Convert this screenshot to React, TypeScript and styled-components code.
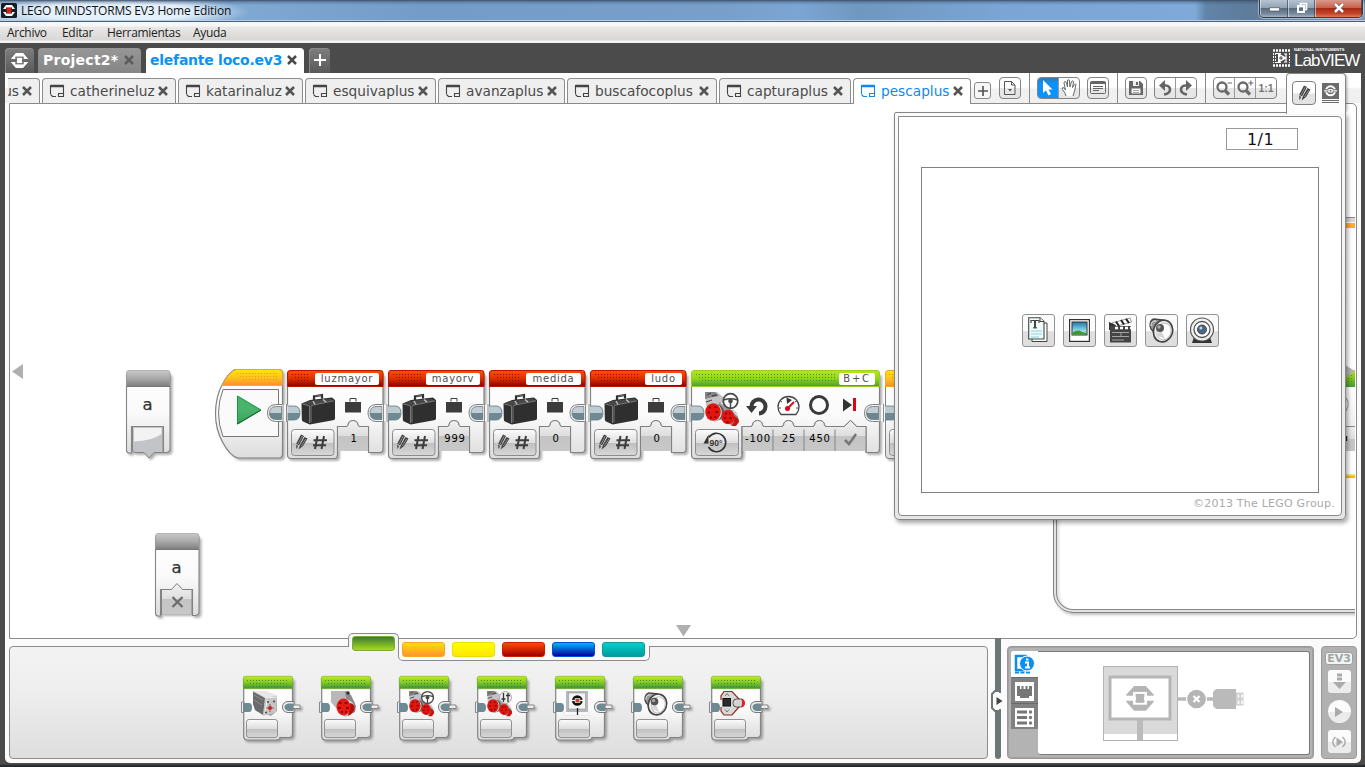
import React from 'react';
import styled, { createGlobalStyle, css } from 'styled-components';

const ui = `'Open Sans', 'Noto Sans', sans-serif`;
const verdana = `'DejaVu Sans', sans-serif`;

const Global = createGlobalStyle`
  * { box-sizing: border-box; }
  html, body { margin: 0; padding: 0; overflow: hidden; }
  body { width: 1365px; height: 767px; background: #4b4b4b; font-family: ${verdana}; }
  svg { display: block; overflow: visible; flex: none; }
`;

const Window = styled.div`
  display: flex;
  flex-direction: column;
  width: 1365px;
  height: 767px;
  background: linear-gradient(#4b4b4b 0 764px, #22272c 766px);
`;

/* ---------- title bar and menu ---------- */
const TitleBar = styled.header`
  display: flex;
  align-items: center;
  height: 22px;
  flex: none;
  padding: 0 2px 0 1px;
  border-bottom: 1px solid #4d5f73;
  box-shadow: inset 0 -1px 0 #b9cfe6;
  background:
    linear-gradient(#3c506b 0, rgba(60, 80, 107, 0.35) 2px, rgba(60, 80, 107, 0) 5px),
    radial-gradient(ellipse 135px 17px at 115px 12px, rgba(233, 244, 253, 0.95) 0 55%, rgba(233, 244, 253, 0) 100%),
    linear-gradient(90deg, #a9c6e2 0, #7fa8d2 240px, #739cc8 420px, #789fca 720px, #7ba5d3 800px, #6f98c0 860px, #7aa5d4 1000px, #7fa9d8 1195px, #6184a8 1206px, #5e7b9a 1250px, #8198ae 1365px);
`;
const AppName = styled.span`
  margin-left: 4px;
  flex: 1;
  font: 12px/20px ${ui};
  letter-spacing: -0.19px;
  color: #111;
  white-space: nowrap;
`;
const WindowButtons = styled.div`
  display: flex;
  align-self: flex-start;
  height: 18px;
  border: 1px solid #2f3d4c;
  border-top: 0;
  border-radius: 0 0 5px 5px;
  overflow: hidden;
  box-shadow: 0 0 0 1px rgba(255, 255, 255, 0.4);
`;
const WindowButton = styled.div<{ $w: number; $close?: boolean }>`
  display: flex;
  align-items: center;
  justify-content: center;
  width: ${(p) => p.$w}px;
  padding-bottom: 1px;
  border-left: 1px solid rgba(240, 245, 250, 0.55);
  border-right: 1px solid rgba(45, 55, 70, 0.6);
  background: ${(p) =>
    p.$close
      ? 'linear-gradient(#d99a8b 0, #c8614c 45%, #a92a12 50%, #c4452a 80%, #df7a55)'
      : 'linear-gradient(#b6c4d2 0, #93a3b4 45%, #5c6c7e 50%, #75879b 80%, #a1b3c4)'};
`;
const MenuBar = styled.nav`
  display: flex;
  gap: 15px;
  height: 21px;
  flex: none;
  padding-left: 7px;
  background: linear-gradient(#f7f7f7 0 4px, #e9e8e7 5px, #d8d7d5 18px, #f4f4f4 19px);
`;
const MenuItem = styled.span<{ $w: number }>`
  width: ${(p) => p.$w}px;
  font: 12px/21px ${ui};
  letter-spacing: -0.3px;
  color: #222;
  white-space: nowrap;
`;

/* ---------- project tabs ---------- */
const ProjectBar = styled.div`
  display: flex;
  align-items: flex-end;
  height: 30px;
  flex: none;
  padding-left: 5px;
`;
const projectTab = css`
  display: flex;
  align-items: center;
  height: 25px;
  padding-bottom: 1px;
  border-radius: 4px 4px 0 0;
`;
const HomeTab = styled.div<{ $w: number; $ml?: number }>`
  ${projectTab}
  justify-content: center;
  width: ${(p) => p.$w}px;
  margin-left: ${(p) => p.$ml ?? 0}px;
  background: linear-gradient(#7e7e7e, #5a5a5a);
  box-shadow: inset 1px 1px 0 #8a8a8a;
`;
const ProjectTab = styled.div<{ $w: number; $ml: number; $active?: boolean; $ls: number }>`
  ${projectTab}
  width: ${(p) => p.$w}px;
  margin-left: ${(p) => p.$ml}px;
  padding-right: 7px;
  padding-left: ${(p) => (p.$active ? 4 : 5)}px;
  justify-content: space-between;
  background: ${(p) => (p.$active ? '#fff' : 'linear-gradient(#979797, #868686)')};
  color: ${(p) => (p.$active ? '#0a93f5' : '#fff')};
  font: bold 14px/24px ${verdana};
  letter-spacing: ${(p) => p.$ls}px;
  white-space: nowrap;
`;
const LabView = styled.div`
  display: flex;
  align-items: center;
  margin-left: auto;
  padding-right: 5px;
  height: 30px;
  gap: 3px;
  color: #fff;
`;
const LabViewText = styled.div`
  display: flex;
  flex-direction: column;
  width: 66px;
  white-space: nowrap;
`;
const LabViewMaker = styled.span`
  font: bold 4px/4px 'Liberation Sans', sans-serif;
  margin-top: 1px;
`;
const LabViewName = styled.span`
  margin-top: -1px;
  font: 17px/19px 'Liberation Sans', sans-serif;
  letter-spacing: -0.9px;
`;

/* ---------- workspace ---------- */
const Workspace = styled.main`
  display: flex;
  flex-direction: column;
  height: 690px;
  margin: 0 4px 0 5px;
  background: #fbfbfb;
  border-radius: 0 0 5px 5px;
  position: relative;
`;
const DocBar = styled.div`
  display: flex;
  height: 30px;
  flex: none;
  padding-left: 3px;
  background: linear-gradient(#fff 0 14px, #f1f1f1 16px, #efefef);
`;
const DocTabs = styled.div`
  display: flex;
  align-items: flex-end;
  gap: 2px;
  padding-top: 5px;
  background: #fff;
`;
const DocTab = styled.div<{ $w: number; $active?: boolean }>`
  display: flex;
  align-items: center;
  justify-content: ${(p) => (p.$w < 50 ? 'flex-end' : 'flex-start')};
  overflow: hidden;
  width: ${(p) => p.$w}px;
  height: ${(p) => (p.$active ? 26 : 25)}px;
  margin-bottom: ${(p) => (p.$active ? -1 : 0)}px;
  position: relative;
  z-index: 1;
  padding: 0 7px ${(p) => (p.$active ? 1 : 0)}px ${(p) => (p.$w < 50 ? 0 : 7)}px;
  border: 1px solid #8d8d8d;
  border-bottom: 0;
  border-left-width: ${(p) => (p.$w < 50 ? 0 : 1)}px;
  border-radius: ${(p) => (p.$w < 50 ? '0 4px 0 0' : '4px 4px 0 0')};
  background: ${(p) => (p.$active ? '#fff' : '#efefef')};
  color: ${(p) => (p.$active ? '#1486f3' : '#4a4a4a')};
  font: 13.7px/23px ${verdana};
  white-space: nowrap;
  span { flex: 1; margin-left: 6px; }
`;
const Tools = styled.div`
  display: flex;
  flex: 1;
  align-items: flex-start;
  padding: 4px 0 0 3px;
`;
const AddDoc = styled.div`
  display: flex;
  align-items: center;
  justify-content: center;
  width: 17px;
  height: 17px;
  margin-top: 5px;
  border: 1px solid #8a8a8a;
  border-radius: 3px;
  background: #f6f6f6;
`;
const Separator = styled.div`
  width: 1px;
  height: 30px;
  margin: -4px 7px 0 8px;
  background: #8a8a8a;
`;
const ToolGroup = styled.div<{ $ml?: number }>`
  display: flex;
  height: 22px;
  margin-left: ${(p) => p.$ml ?? 0}px;
  border: 1px solid #848484;
  border-radius: 4px;
  overflow: hidden;
  background: linear-gradient(#fff 0 48%, #e6e6e6 52%);
`;
const Tool = styled.div<{ $active?: boolean }>`
  display: flex;
  align-items: center;
  justify-content: center;
  width: 20px;
  height: 20px;
  background: ${(p) => (p.$active ? 'linear-gradient(#3579a8, #0a93ff 30%)' : 'transparent')};
  font: bold 10.5px/20px 'Liberation Sans', sans-serif;
  color: #777;
  & + & { border-left: 1px solid #999; width: 21px; }
`;

/* ---------- programming canvas ---------- */
const Canvas = styled.section`
  position: relative;
  width: 1348px;
  height: 536px;
  flex: none;
  margin-left: 4px;
  border: 1px solid #8a8a8a;
  border-radius: 0 5px 5px 0;
  background: #fff;
`;
const Clip = styled.div`
  position: absolute;
  inset: 0 1px 0 0;
  overflow: hidden;
`;
const Node = styled.div<{ $x: number; $y: number; $w?: number }>`
  position: absolute;
  left: ${(p) => p.$x - 10}px;
  top: ${(p) => p.$y - 104}px;
  width: ${(p) => p.$w ?? 97}px;
  height: 90px;
`;
const Art = styled.svg`
  position: absolute;
  left: 0;
  top: 0;
`;
const Shaded = styled.g`
  filter: drop-shadow(2px 2px 1px rgba(0, 0, 0, 0.3));
`;
const NodeHeader = styled.div`
  position: relative;
  display: flex;
  justify-content: flex-end;
  padding: 3px 5px 0 0;
`;
const NodeLabel = styled.span<{ $w: number; $ls?: number }>`
  width: ${(p) => p.$w}px;
  height: 12px;
  border-radius: 2px;
  background: #fff;
  color: #505050;
  font: 10px/12px ${verdana};
  letter-spacing: ${(p) => p.$ls ?? 0.75}px;
  text-align: center;
  white-space: nowrap;
`;
const ValueRow = styled.div<{ $ml: number }>`
  position: relative;
  display: flex;
  margin: 47px 0 0 ${(p) => p.$ml}px;
`;
const Value = styled.span`
  width: 31px;
  padding-left: 1px;
  font: 10px/14px ${verdana};
  letter-spacing: 0.8px;
  text-align: center;
  white-space: nowrap;
  color: #000;
`;
const ParamName = styled.div`
  position: relative;
  padding-top: 24px;
  width: 43px;
  text-align: center;
  font: 16.5px/22px ${verdana};
  -webkit-text-stroke: 0.25px #333;
  color: #333;
`;
const LoopFrame = styled.div`
  position: absolute;
  left: 1043px;
  top: 300px;
  width: 340px;
  height: 209px;
  border: 1px solid #868686;
  border-radius: 0 0 0 20px;
  box-shadow: 2px 2px 3px rgba(0, 0, 0, 0.25), inset 0 0 0 2px #e2e2e2, inset 0 0 0 3px #868686, inset 5px 0 3px rgba(0, 0, 0, 0.14);
`;
const Sliver = styled.div<{ $y: number; $h: number; $bg: string }>`
  position: absolute;
  right: 0;
  top: ${(p) => p.$y - 104}px;
  width: 12px;
  height: ${(p) => p.$h}px;
  background: ${(p) => p.$bg};
`;
const ScrollMark = styled.svg<{ $x: number; $y: number }>`
  position: absolute;
  left: ${(p) => p.$x - 10}px;
  top: ${(p) => p.$y - 104}px;
`;

/* ---------- content editor overlay ---------- */
const Editor = styled.aside`
  position: absolute;
  z-index: 3;
  left: 889px;
  top: 39px;
  width: 452px;
  height: 408px;
  padding: 3px;
  border: 1px solid #868686;
  border-radius: 2px 0 5px 5px;
  background: linear-gradient(#fafafa, #e6e6e6);
  box-shadow: 2px 3px 4px rgba(0, 0, 0, 0.35);
`;
const EditorTab = styled.div`
  position: absolute;
  z-index: 4;
  right: 15px;
  top: 0;
  width: 60px;
  height: 41px;
  display: flex;
  gap: 6px;
  padding: 7px 0 0 5px;
  border: 1px solid #868686;
  border-bottom: 0;
  border-radius: 4px 4px 0 0;
  background: #fcfcfc;
  box-shadow: 3px 0 3px -2px rgba(0, 0, 0, 0.35);
`;
const PencilButton = styled.div`
  display: flex;
  align-items: center;
  justify-content: center;
  width: 24px;
  height: 24px;
  border: 1px solid #808080;
  border-radius: 4px;
  background: linear-gradient(#fff 50%, #e2e2e2 54%);
`;
const EditorBody = styled.div`
  display: flex;
  flex-direction: column;
  width: 444px;
  height: 400px;
  padding: 11px 7px 0 22px;
  border: 1px solid #8a8a8a;
  border-radius: 0 4px 4px 4px;
  background: #fff;
`;
const PageField = styled.div`
  align-self: flex-end;
  width: 72px;
  height: 22px;
  padding-right: 3px;
  margin-right: 36px;
  border: 1px solid #999;
  font: 16px/21px ${verdana};
  letter-spacing: 0.4px;
  text-align: center;
  color: #111;
`;
const PageFrame = styled.div`
  display: flex;
  align-items: center;
  justify-content: center;
  gap: 8px;
  width: 398px;
  height: 326px;
  margin-top: 17px;
  border: 1px solid #808080;
`;
const MediaButton = styled.div`
  display: flex;
  align-items: center;
  justify-content: center;
  width: 33px;
  height: 33px;
  border: 1px solid #929292;
  border-radius: 3px;
  background: linear-gradient(#fbfbfb 50%, #dfdfdf 54%);
`;
const Copyright = styled.div`
  align-self: flex-end;
  margin: 3px -1px 0 0;
  font: 11px/16px ${verdana};
  letter-spacing: 0.23px;
  color: #aaa;
  white-space: nowrap;
`;

/* ---------- footer ---------- */
const Footer = styled.footer`
  display: flex;
  flex: 1;
  padding: 7px 0 0 4px;
`;
const Palette = styled.div`
  display: flex;
  flex-direction: column;
  width: 979px;
  height: 113px;
  border: 1px solid #8c8c8c;
  border-radius: 4px;
  background: linear-gradient(#f3f3f3, #eee 40%, #dedede);
`;
const Categories = styled.div`
  display: flex;
  height: 28px;
  margin: -14px 0 0 338px;
`;
const ActiveCategory = styled.div`
  position: relative;
  z-index: 2;
  width: 51px;
  height: 14px;
  padding: 2px 0 0 3px;
  border: 1px solid #8c8c8c;
  border-width: 1px 1px 0 1px;
  border-radius: 5px 5px 0 0;
  background: #f3f3f3;
`;
const OtherCategories = styled.div`
  position: relative;
  z-index: 1;
  display: flex;
  gap: 7px;
  width: 252px;
  height: 15px;
  margin: 13px 0 0 -1px;
  padding: 0 0 0 3px;
  background: #fbfbfb;
  border: 1px solid #8c8c8c;
  border-top: 0;
  border-radius: 0 0 5px 5px;
`;
const Swatch = styled.div<{ $from: string; $to: string; $edge: string; $active?: boolean }>`
  width: 43px;
  height: 15px;
  flex: none;
  margin-top: ${(p) => (p.$active ? 0 : -4)}px;
  border-radius: 3px;
  border: 1px solid ${(p) => p.$edge};
  background: linear-gradient(${(p) => p.$from}, ${(p) => p.$to});
  box-shadow: ${(p) => (p.$active ? '0 0 0 1px #fff' : 'none')};
`;
const PaletteBlocks = styled.div`
  display: flex;
  gap: 26px;
  margin: 15px 0 0 233px;
`;
const PaletteSlot = styled.div`
  width: 52px;
  height: 66px;
`;
const Splitter = styled.div`
  position: relative;
  width: 6px;
  height: 121px;
  margin: -8px 6px 0 7px;
  border-radius: 0 0 3px 3px;
  background: #6d7577;
`;
const SplitterGrip = styled.svg`
  position: absolute;
  left: -4px;
  top: 52px;
`;
const Hardware = styled.div`
  display: flex;
  width: 307px;
  height: 113px;
  padding: 3px 3px 2px 3px;
  border: 1px solid #989898;
  border-radius: 4px;
  background: #b3b3b3;
  box-shadow: inset 0 0 0 1px #a2a2a2;
`;
const HwTabs = styled.div`
  width: 27px;
  height: 80px;
  position: relative;
  z-index: 1;
  margin-top: 1px;
`;
const HwTab = styled.div<{ $active?: boolean }>`
  display: flex;
  align-items: center;
  justify-content: center;
  height: 26px;
  padding-top: 1px;
  border-top: ${(p) => (p.$active ? 'none' : '1px solid #6a6a6a')};
  background: ${(p) => (p.$active ? '#fff' : '#818181')};
  border-radius: ${(p) => (p.$active ? '2px 0 0 0' : '0')};
`;
const HwContent = styled.div`
  width: 272px;
  height: 104px;
  margin-top: 1px;
  border: 1px solid #7a7a7a;
  border-left: 0;
  border-radius: 0 3px 3px 3px;
  background: #fff;
`;
const Controls = styled.div`
  display: flex;
  flex-direction: column;
  align-items: center;
  width: 36px;
  height: 113px;
  margin-left: 7px;
  padding-top: 5px;
  border: 1px solid #999;
  border-radius: 4px;
  background: #b1b1b1;
`;
const Ev3Badge = styled.div`
  width: 28px;
  height: 13px;
  border: 1px solid #9f9f9f;
  border-radius: 3px;
  background: #eff5f3;
  font: bold 11px/11px 'DejaVu Sans', sans-serif;
  text-align: center;
  color: #a3a3a3;
`;
const ControlButton = styled.div<{ $round?: boolean; $mt: number }>`
  display: flex;
  align-items: center;
  justify-content: center;
  width: 23px;
  height: 23px;
  margin-top: ${(p) => p.$mt}px;
  border-radius: ${(p) => (p.$round ? '50%' : '3px')};
  background: linear-gradient(#fbfbfb 50%, #ececec 52%);
`;

/* ---------- icons ---------- */
const Cross = ({ c = '#555', s = 10 }: { c?: string; s?: number }) => (
  <svg width={s} height={s} viewBox="0 0 10 10"><path d="M1 1L9 9M9 1L1 9" stroke={c} strokeWidth="2.500" /></svg>
);
const Plus = ({ c, s }: { c: string; s: number }) => (
  <svg width={s} height={s} viewBox="0 0 12 12"><path d="M6 0V12M0 6H12" stroke={c} strokeWidth="2" /></svg>
);
const DocIcon = ({ c }: { c: string }) => (
  <svg width="14" height="13" viewBox="0 1 14 13" fill="none" stroke={c}>
    <path d="M.5 10V1.500H13.500V12.500H8.500V9.500H13.500M6 12.500H2.500L.5 10.500" strokeWidth="1.100" /><path d="M.5 2H13.500" strokeWidth="2.500" />
  </svg>
);
const Ev3Mark = ({ c, bg, w }: { c: string; bg: string; w: number }) => (
  <svg width={w} height={w * 0.88} viewBox="0 0 28 25">
    <path d="M8 0H20L28 9V10H0V9ZM0 15H28V16L20 25H8L0 16Z" fill={c} />
    <rect x="7" y="6" width="14" height="13" fill={bg} /><rect x="9.500" y="8" width="9" height="9" fill={c} />
    <path d="M1 12.500H27" stroke={bg} strokeWidth="3" /><rect x="10" y="8.500" width="8" height="8" fill={c} />
  </svg>
);
/* Two thick pencils side by side, tips at the lower left. */
const Pencils = ({ s = 18 }: { s?: number }) => (
  <svg width={s} height={s} viewBox="0 0 18 18">
    <path d="M9 1.500L12 3L7.500 11.500L4 15.500L4.500 10ZM12.500 4L15.500 5.500L11 13L6.500 16.500L8 12Z" fill="#424242" />
    <path d="M10.300 3L6 11M13.800 6L9.300 13" stroke="#a9a9a9" strokeWidth=".7" />
    <path d="M4.500 11.500L6.800 12.600" stroke="#eee" strokeWidth=".9" /><path d="M4.500 13.500L4 16L6 14.500Z" fill="#777" />
  </svg>
);
const Speaker = ({ s }: { s: number }) => (
  <svg width={s} height={s} viewBox="0 0 26 26">
    <path d="M3 12C1 8 2 3 6 2L15 3L10 20L5 14Z" fill="#999" stroke="#444" strokeWidth="1.300" />
    <path d="M3 9C3 5 5 4 8 4" stroke="#e8e8e8" fill="none" />
    <ellipse cx="15" cy="14" rx="9.500" ry="11" fill="#eee" stroke="#444" strokeWidth="1.700" transform="rotate(18 15 14)" />
    <ellipse cx="16" cy="14.500" rx="7" ry="8.500" fill="#fff" stroke="#bbb" transform="rotate(18 16 14.500)" />
    <path d="M8 18L13 13L17 22Z" fill="#d5d5d5" />
    <circle cx="12" cy="11" r="4" fill="#555" /><circle cx="11" cy="10" r="1.700" fill="#aaa" />
  </svg>
);
const Motor = ({ x, y, s = 1 }: { x: number; y: number; s?: number }) => (
  <g transform={`translate(${x} ${y}) scale(${s})`}>
    <path d="M0 0H12L22 8L18 19L1 14Z" fill="#c4c4c4" />
    <path d="M0 0H10L14 4L8 5L0 7Z" fill="#858585" /><path d="M2 3L6 1M7 4L12 3M1 10L7 8" stroke="#4d4d4d" strokeWidth="1.300" />
    <path d="M14 10L24 12L33 24L26 33L14 27Z" fill="#9b9b9b" /><path d="M16 11L24 14L31 23" stroke="#eee" fill="none" strokeWidth="1.500" />
    <path d="M8 11.500C22 11 23 28 9 29.500Z" fill="#5a5a5a" /><path d="M8 11.500C19 11 20 28 9 29.500Z" fill="#dcdcdc" />
    <ellipse cx="8" cy="20" rx="7.800" ry="8.800" fill="#e3150f" /><path d="M4 15.500h2M9.500 15h2M2.500 20.500h2.500M10.500 20h2.500M5 25.500h2M9.500 25h2" stroke="#6c0000" strokeWidth="1.700" />
    <path d="M24 17L31 20L34 28L30 34L24 32Z" fill="#8a8a8a" /><path d="M28 19L33 24" stroke="#ddd" strokeWidth="1.500" />
    <ellipse cx="23" cy="25" rx="6.500" ry="7.300" fill="#e3150f" /><path d="M20 21.500h2M24 21.500h1.500M19 26h2M24.500 26h2M21.500 30h2" stroke="#6c0000" strokeWidth="1.500" />
    <path d="M29 24Q34 26 34 30L31 34H26Q30 31 29 24Z" fill="#c9130d" />
  </g>
);
const Wheel = ({ cx, cy, r }: { cx: number; cy: number; r: number }) => (
  <g transform={`translate(${cx} ${cy}) scale(${r / 8})`} fill="none" stroke="#484848">
    <circle r="7.300" fill="#fff" fillOpacity=".85" strokeWidth="1.700" /><path d="M-7 -1Q0 -3.500 7 -1M0 1V7" strokeWidth="1.500" /><circle r="2.300" fill="#484848" stroke="none" />
  </g>
);
const Case = ({ x, y }: { x: number; y: number }) => (
  <g transform={`translate(${x} ${y})`}>
    <path d="M13 6.500V2.500L21 1V4.500" fill="none" stroke="#2d2d2d" strokeWidth="2.200" /><path d="M14 2.200L20.500 1" stroke="#888" strokeWidth=".7" />
    <path d="M.5 9.500L9 6L31 3.500L34 6L34 24.500Q34 26 32 26.300L10 30.300Q8.500 30.600 7 29.800L2 27.500Q.8 27 .8 25Z" fill="#2f2f2f" />
    <path d="M1.500 9.500L9.500 11L32.500 6.800L30 4.700L9 7Z" fill="#484848" />
    <path d="M1.300 10L8.500 11.800V29M10 11.500L33 6.800M10 28.500V12" stroke="#8b8b8b" fill="none" strokeWidth=".8" />
    <path d="M12 7L14 10.500M22 5.500L25 8" stroke="#c5c5c5" strokeWidth="1.300" />
  </g>
);
const Dots = ({ x, n, c, y = 4 }: { x: number; n: number; c: string; y?: number }) => (
  <g fill={c}>
    {[0, 1, 2].map((r) => Array.from({ length: Math.max(0, n - r) }, (_, i) => <rect key={`${r}-${i}`} x={x + (i + r) * 3} y={y + r * 3} width="1" height="1" />))}
  </g>
);
const PlugIn = ({ x = 0, y = 36, h = 14, w = 13 }: { x?: number; y?: number; h?: number; w?: number }) => (
  <g>
    <path d={`M${x} ${y}H${x + w - 6}Q${x + w} ${y} ${x + w} ${y + h / 2}Q${x + w} ${y + h} ${x + w - 6} ${y + h}H${x}Z`} fill="#6f8a93" />
    <path d={`M${x} ${y}H${x + w - 6}Q${x + w} ${y} ${x + w} ${y + h / 2}H${x}Z`} fill="#bccad1" />
    <path d={`M${x} ${y}H${x + w - 6}Q${x + w} ${y} ${x + w} ${y + h / 2}Q${x + w} ${y + h} ${x + w - 6} ${y + h}H${x}`} fill="none" stroke="#657b84" strokeWidth=".8" />
  </g>
);
const PlugOut = ({ x }: { x: number }) => (
  <g>
    <path d={`M${x + 1} 34.500H${x - 7}Q${x - 15} 35 ${x - 15} 43Q${x - 15} 51 ${x - 7} 51.500H${x + 1}Z`} fill="#f4f4f4" stroke="#808080" />
    <path d={`M${x - 1} 36.500H${x - 7}Q${x - 13} 37 ${x - 13} 43H${x - 1}Z`} fill="#c3ced4" />
    <path d={`M${x - 1} 43H${x - 13}Q${x - 13} 49 ${x - 7} 49.500H${x - 1}Z`} fill="#6c858e" />
    <path d={`M${x - 1} 36.500H${x - 7}Q${x - 13} 37 ${x - 13} 43Q${x - 13} 49 ${x - 7} 49.500H${x - 1}Z`} fill="none" stroke="#657b84" strokeWidth=".8" />
    <rect x={x - 0.5} y="34.500" width="5.500" height="17" fill="#f6f6f6" /><path d={`M${x + 0.5} 34V52M${x + 4} 34V52`} stroke="#8a8a8a" />
  </g>
);
const Gradients = () => (
  <svg width="0" height="0">
    <defs>
      {[
        ['body', '#fff', '#fafafa', '#dcdcdc'], ['red', '#ff4f00', '#e03000', '#8a0000'], ['green', '#b5ea12', '#93d51c', '#4a9a38'],
        ['orange', '#ffe800', '#ffc41c', '#ff8d30'], ['gray', '#c8c8c8', '#a9a9a9', '#7d7d7d'], ['lime', '#c5ee10', '#84c92a', '#3f9038'], ['tri', '#4ab46c', '#4ab46c', '#35a457'],
      ].map(([id, a, b, c]) => (
        <linearGradient key={id} id={id} x1="0" y1="0" x2="0" y2="1"><stop offset="0" stopColor={a} /><stop offset=".5" stopColor={b} /><stop offset="1" stopColor={c} /></linearGradient>
      ))}
      <linearGradient id="tray" x1="0" y1="0" x2="0" y2="1"><stop offset="0" stopColor="#f2f2f2" /><stop offset=".5" stopColor="#dedede" /><stop offset=".52" stopColor="#c4c4c4" /><stop offset="1" stopColor="#c8c8c8" /></linearGradient>
      <linearGradient id="btn" x1="0" y1="0" x2="0" y2="1"><stop offset="0" stopColor="#fdfdfd" /><stop offset=".5" stopColor="#dedede" /><stop offset=".53" stopColor="#c0c0c0" /><stop offset="1" stopColor="#d8d8d8" /></linearGradient>
      <linearGradient id="sky" x1="0" y1="0" x2="0" y2="1"><stop offset="0" stopColor="#167ba9" /><stop offset=".7" stopColor="#9bdcf0" /></linearGradient>
    </defs>
  </svg>
);

/* Body outline shared by all canvas blocks: mode foot on the left, value tray, short foot on the right. */
const BlockShape = ({ w, mode, slots, head, edge }: { w: number; mode: number; slots: number; head: string; edge: string }) => {
  const trayEnd = mode + slots * 31;
  const bumps = Array.from({ length: slots }, (_, i) => {
    const c = mode + 15.5 + i * 31;
    return i === 3 ? `H${c - 6}L${c} 50.500L${c + 6} 56.500` : `H${c - 6}Q${c - 4.500} 55 ${c - 4.500} 53Q${c - 3} 50.500 ${c} 50.500Q${c + 3} 50.500 ${c + 4.500} 53Q${c + 4.500} 55 ${c + 6} 56.500`;
  }).join('');
  return (
    <>
      <Shaded>
        <path d={`M.5 4V85Q.5 88.500 4 88.500H${mode - 3}Q${mode} 88.500 ${mode} 85V56.500${bumps}H${trayEnd}V82.500H${w - 3}Q${w} 82.500 ${w} 79V4Z`} fill="url(#body)" stroke="#828282" strokeWidth="1.200" />
      </Shaded>
      <path d={`M${mode + 0.5} 57${bumps}H${trayEnd}V81H${mode + 0.5}Z`} fill="url(#tray)" />
      <path d={`M${mode} 84V56.500${bumps}H${trayEnd}V82`} fill="none" stroke="#808080" />
      {Array.from({ length: slots - 1 }, (_, i) => <path key={i} d={`M${mode + 31 * (i + 1)} 59.500V81`} stroke="#858585" />)}
      <path d={`M.5 16.500V3Q.5 .5 3 .5H${w - 2.500}Q${w} .5 ${w} 3V16.500Z`} fill={`url(#${head})`} stroke={edge} strokeWidth="1" />
      <PlugIn /><PlugOut x={w} />
      <rect x="4.500" y="59.500" width={mode - 8} height="26" rx="3" fill="url(#btn)" stroke="#8c8c8c" />
    </>
  );
};

const VariableBlock = ({ x, name, value, labelW }: { x: number; name: string; value: string; labelW: number }) => (
  <Node $x={x} $y={370}>
    <Art width="97" height="90">
      <BlockShape w={96} mode={50.500} slots={1} head="red" edge="#b81400" />
      <Dots x={5} n={Math.floor((84 - labelW) / 3)} c="#861000" />
      <Case x={14} y={24} />
      <path d="M58 32H74V42.500H58Z" fill="#3c3c3c" /><path d="M63 31.500V28.500H69V31.500" stroke="#3c3c3c" fill="#fff" />
      <g transform="translate(5 63)"><Pencils s={18} /></g>
      <path d="M30.500 66L28 79M37 66L34.500 79M26.500 70.200H40M26 75.200H39" stroke="#3d3d3d" strokeWidth="2" />
    </Art>
    <NodeHeader><NodeLabel $w={labelW}>{name}</NodeLabel></NodeHeader>
    <ValueRow $ml={51}><Value>{value}</Value></ValueRow>
  </Node>
);

const MoveBlock = () => (
  <Node $x={691} $y={370} $w={189}>
    <Art width="189" height="90">
      <BlockShape w={188.500} mode={51} slots={4} head="green" edge="#9ccc20" />
      <Dots x={5} n={47} c="#2f9a2c" />
      <Motor x={14} y={22} /><Wheel cx={39.500} cy={31} r={8} />
      <path d="M60.500 37A7 7 0 1 1 68 43.500" fill="none" stroke="#3a3a3a" strokeWidth="4" /><path d="M55 36H66L60.500 43Z" fill="#3a3a3a" />
      <path d="M90 44.500Q87 41 87 37A10.500 10.500 0 1 1 108 37Q108 41 105 44.500Z" fill="#fff" stroke="#444" strokeWidth="1.300" />
      <path d="M91 32l-1.500-1M104 32l1.500-1M90 38h-2m17 0h2" stroke="#444" /><path d="M96 34L95.500 27.500L101 30Z" fill="#333" /><circle cx="96.500" cy="38.500" r="2.500" fill="#e3001b" /><path d="M97 38L103 32" stroke="#e3001b" strokeWidth="1.800" />
      <circle cx="128" cy="35" r="8.500" fill="none" stroke="#3a3a3a" strokeWidth="3" />
      <path d="M152 28.500L161 35L152 41.500Z" fill="#333" /><rect x="162" y="28" width="3" height="13" fill="#e3001b" />
      <path d="M154 70L158 74L165 64" fill="none" stroke="#777" strokeWidth="2.500" />
      <path d="M17.800 67.500A9.200 9.200 0 1 1 17.500 77" fill="none" stroke="#333" strokeWidth="1.600" /><path d="M12.500 73.500L17.500 64.500V73.500Z" fill="#333" />
      <text x="18.500" y="75.500" fontFamily="Liberation Sans" fontSize="8.500" fontWeight="bold" fill="#333" textLength="13">90°</text>
    </Art>
    <NodeHeader><NodeLabel $w={36} $ls={1.7}>B+C</NodeLabel></NodeHeader>
    <ValueRow $ml={51}><Value>-100</Value><Value>25</Value><Value>450</Value></ValueRow>
  </Node>
);

const StartBlock = () => (
  <Node $x={215} $y={369}>
    <Art width="70" height="90">
      <Shaded>
        <path d="M20 .5H64Q67.500 .5 67.500 4V85Q67.500 89 64 89H23Q15 87 7.500 73Q.5 60 .5 45Q.5 28 7 16Q13 4 20 .5Z" fill="url(#body)" stroke="#828282" strokeWidth="1.200" />
      </Shaded>
      <path d="M7 16.500Q13 4 21 .5H64Q67.500 .5 67.500 4V16.500Z" fill="url(#orange)" stroke="#f0a528" strokeWidth=".8" />
      <Dots x={22} n={14} c="#e0a010" />
      <path d="M8 20.500H63.500V67.500H8Q3.500 56 3.500 44Q3.500 32 8 20.500Z" fill="#fafafa" stroke="#777" />
      <path d="M22.500 27L46 41L22.500 55Z" fill="url(#tri)" stroke="#169440" /><path d="M46 41L22.500 55" stroke="#135c29" />
      <g transform="translate(0 1)"><PlugOut x={67.500} /></g>
    </Art>
  </Node>
);

const ParamBlock = ({ x, y, output }: { x: number; y: number; output?: boolean }) => (
  <Node $x={x} $y={y} $w={44}>
    <Art width="44" height="90">
      <Shaded>
        <path d="M.5 4V80Q.5 83 3 83H5.500V56.500H37.500V82.500H41Q44 82 44 79V4Z" fill="url(#body)" stroke="#858585" strokeWidth="1.100" />
        {output
          ? <path d="M6.500 56.500H16.500L22 50.500L27.500 56.500H37V81H6.500Z" fill="url(#tray)" />
          : <path d="M6.500 56.500H37V82.500H28L23 88L18 82.500H9Q6.500 82.500 6.500 79Z" fill="#c2c4c7" stroke="#858585" />}
      </Shaded>
      {output
        ? <><path d="M6.500 82V56.500H16.500L22 50.500L27.500 56.500H37V81" fill="none" stroke="#808080" /><path d="M17.500 64L27.500 74M27.500 64L17.500 74" stroke="#6c6c6c" strokeWidth="2.300" /></>
        : <path d="M8 58H35.500V64Q26 71 8 71.500Z" fill="#f3f3f3" />}
      <path d="M.5 16.500V3Q.5 .5 3 .5H41.500Q44 .5 44 3V16.500Z" fill="url(#gray)" stroke="#a0a0a0" strokeWidth=".7" />
      <path d="M0 16.500H44" stroke="#777" />
    </Art>
    <ParamName>a</ParamName>
  </Node>
);

const paletteIcons: React.ReactNode[] = [
  <g key="m"><path d="M10 15H22L34 20V35L28 40L13 35Z" fill="#a8a8a8" /><path d="M10 15H23L34 20L22 22Z" fill="#e8e8e8" /><path d="M10 16L22 22L20 39L12 34L10 28Z" fill="#6a6a6a" /><path d="M11 19L20 24M11 24L19 29" stroke="#8f8f8f" /><path d="M22 22L34 21L33 36L20 40Z" fill="#c6c6c6" /><path d="M22 22L34 21M24 24L22 38" stroke="#fff" strokeWidth=".8" /><circle cx="27" cy="32" r="2" fill="#c22" /><path d="M27 28v8m-4-4h8" stroke="#a33" strokeWidth=".8" /><circle cx="25" cy="26" r="1" fill="#444" /><circle cx="31" cy="25.500" r="1" fill="#444" /><circle cx="23" cy="36.500" r="1" fill="#444" /></g>,
  <g key="l"><path d="M10 15H27L34 27V36L24 41L15 32L10 26Z" fill="#b8b8b8" /><path d="M24 15L30 19L35 30L34 36L28 38" fill="#8a8a8a" /><circle cx="27" cy="17" r="1.800" fill="#333" /><path d="M23 23C36 24 36 37 27 40Z" fill="#ddd" /><path d="M29 27C36 28 35 37 27 40Z" fill="#b60e0b" /><ellipse cx="22.500" cy="31" rx="7" ry="8.500" fill="#e41a14" /><path d="M18 27h2.500m3 0h3M17 32h3m5 0h3M20 36h2m2 0h2" stroke="#7a0000" strokeWidth="1.600" /></g>,
  <g key="s"><Motor x={10} y={15} s={0.74} /><Wheel cx={28.500} cy={21.500} r={6.500} /></g>,
  <g key="t"><Motor x={10} y={15} s={0.74} /><circle cx="28.500" cy="21.500" r="6" fill="#eee" stroke="#aaa" /><path d="M26.500 17v9M31 17v9M24.500 23h4M29 19.500h4" stroke="#333" strokeWidth="1.300" /></g>,
  <g key="d"><rect x="11" y="15" width="22" height="23" fill="#b4b9bd" /><rect x="13.500" y="17" width="17" height="16" fill="#f4f4f4" stroke="#888" strokeWidth=".5" /><circle cx="22.300" cy="24.500" r="5.300" fill="#111" /><path d="M16.500 24.500H28" stroke="#f4f4f4" strokeWidth="1.200" /><rect x="19.800" y="22.300" width="5.400" height="4.400" fill="#fff" /><rect x="20.500" y="23" width="4" height="3" fill="#e33a1b" /><path d="M9 36V39.500H34V36" fill="#f8f8f8" stroke="#ddd" strokeWidth=".5" /><path d="M22.500 32v7" stroke="#222" strokeWidth="1.300" /></g>,
  <g key="a" transform="translate(10 15)"><Speaker s={25} /></g>,
  <g key="b"><path d="M13 15.500H21L28 23V31L21 39H13L10 35V20Z" fill="#d8d8d8" stroke="#8d2d1b" strokeWidth="1.200" /><path d="M10 24V31" stroke="#eee" strokeWidth="2" /><rect x="12" y="22.500" width="7.500" height="7.500" fill="#2b2b2b" stroke="#111" /><path d="M14 20L16 17.500L18 20M14 33.500L16 36L18 33.500" stroke="#777" fill="none" /><rect x="22" y="23" width="11" height="8" rx="3.500" fill="#d5d5d5" stroke="#333" strokeWidth=".8" /><path d="M30 22.500Q34 23 34 27Q34 31 30 31.500Q32 27 30 22.500Z" fill="#e02030" /></g>,
];

const PaletteBlock = ({ icon }: { icon: React.ReactNode }) => (
  <PaletteSlot>
    <svg width="52" height="66" viewBox="0 0 52 66">
      <Shaded>
        <path d="M.7 3V60Q.7 64 4.500 64H33Q37 64 37 61.500H46Q49.500 61.500 49.500 58V3Z" fill="url(#body)" stroke="#838383" strokeWidth="1.200" />
        <path d="M49.500 29H57V32.500H49.500Z" fill="#eee" stroke="#888" />
      </Shaded>
      <path d="M.3 12.700V2Q.3 .3 2 .3H48Q49.700 .3 49.700 2V12.700Z" fill="url(#lime)" stroke="#6fb52c" strokeWidth=".6" />
      <Dots x={4} n={14} c="#2a922f" />
      <rect x="3.500" y="43.500" width="31" height="18" rx="2.500" fill="url(#btn)" stroke="#929292" />
      <path d="M-1.500 26H1V36.500H-1.500Z" fill="#eee" stroke="#888" /><path d="M0 27H6Q9 27 9 31.500Q9 36 6 36H0Z" fill="#6f8a93" />
      <path d="M51 25.500H45Q39.500 26 39.500 31Q39.500 36 45 36.500H51V33H50V29H51Z" fill="#eee" stroke="#777" /><path d="M50 27.500H45.500Q41.500 28 41.500 31Q41.500 34 45.500 35H50Z" fill="#6f8a93" />
      {icon}
    </svg>
  </PaletteSlot>
);

const docs: [string, number, boolean?][] = [
  ['catherineluz', 134], ['katarinaluz', 125], ['esquivaplus', 131], ['avanzaplus', 127], ['buscafocoplus', 150], ['capturaplus', 132], ['pescaplus', 118, true],
];
const variables: [number, string, string, number][] = [[287, 'luzmayor', '1', 64], [388, 'mayorv', '999', 54], [489, 'medida', '0', 55], [590, 'ludo', '0', 37]];

const Magnifier = ({ plus }: { plus?: boolean }) => (
  <svg width="18" height="18" viewBox="0 0 18 18" fill="none" stroke="#6a6a6a"><circle cx="7" cy="8" r="4.500" strokeWidth="2.300" /><path d="M10 11.500L14 15.500" strokeWidth="3.200" /><path d={plus ? 'M14.800 1.500V6.500M12.300 4H17.300' : 'M12.500 4H17'} strokeWidth="1.100" /></svg>
);
const Turn = ({ flip }: { flip?: boolean }) => (
  <svg width="16" height="16" viewBox="0 0 16 16"><g transform={flip ? 'translate(16 0) scale(-1 1)' : undefined}><path d="M5 5.500H8.500Q13 6 13 9.500Q13 13.500 7 14.500" fill="none" stroke="#666" strokeWidth="2.600" /><path d="M2 5.500L8 0V11Z" fill="#666" /></g></svg>
);

export default function App() {
  return (
    <Window>
      <Global />
      <TitleBar>
        <svg width="16" height="17" viewBox="0 0 16 17"><rect y="1" width="16" height="15" rx="1.500" fill="#151e25" /><path d="M5 3H11L14 7H11V5.500H5V7H2ZM2 10H5V11.500H11V10H14L11 14H5Z" fill="#fff" /><rect x="5.500" y="6" width="5" height="5" fill="#d22418" /></svg>
        <AppName>LEGO MINDSTORMS EV3 Home Edition</AppName>
        <WindowButtons>
          <WindowButton $w={28}><svg width="11" height="4"><rect x=".5" y="1.800" width="10" height="3.200" fill="#fff" stroke="#4a5866" strokeWidth=".7" /></svg></WindowButton>
          <WindowButton $w={27}><svg width="12" height="12" fill="none"><path d="M4.500 3.500V1.500H10.500V7.500H8.500" stroke="#fff" strokeWidth="1.600" /><rect x="2" y="4" width="6" height="6" stroke="#fff" strokeWidth="2" /></svg></WindowButton>
          <WindowButton $w={47} $close><svg width="12" height="10"><path d="M2 1L10 9M10 1L2 9" stroke="#544" strokeWidth="3.800" /><path d="M2 1L10 9M10 1L2 9" stroke="#fff" strokeWidth="2.500" /></svg></WindowButton>
        </WindowButtons>
      </TitleBar>
      <MenuBar>
        <MenuItem $w={40}>Archivo</MenuItem><MenuItem $w={30}>Editar</MenuItem><MenuItem $w={71}>Herramientas</MenuItem><MenuItem $w={36}>Ayuda</MenuItem>
      </MenuBar>
      <ProjectBar>
        <HomeTab $w={29}><Ev3Mark c="#fff" bg="#6a6a6a" w={17} /></HomeTab>
        <ProjectTab $w={103} $ml={4} $ls={0.25}>Project2*<Cross c="#5c5c5c" /></ProjectTab>
        <ProjectTab $w={158} $ml={5} $ls={-0.25} $active>elefante loco.ev3<Cross c="#4a4a4a" /></ProjectTab>
        <HomeTab $w={21} $ml={5}><Plus c="#fff" s={12} /></HomeTab>
        <LabView>
          <svg width="19" height="18" viewBox="0 0 19 18" fill="none" stroke="#fff"><path d="M1 1.500H18M1 16.500H18" strokeWidth="2.500" strokeDasharray="2 1" /><path d="M1.500 4V14M17.500 4V14M3.500 4V14" strokeDasharray="2 1" /><path d="M4 4.500H9M4 13.500H9M14 5V13M12 5H15M12 13H15" strokeWidth="1.200" /><path d="M6 4L15 9L6 14Z" fill="#fff" stroke="none" /><path d="M9 7V11M7 9H11" stroke="#4b4b4b" /></svg>
          <LabViewText><LabViewMaker>NATIONAL INSTRUMENTS</LabViewMaker><LabViewName>LabVIEW</LabViewName></LabViewText>
        </LabView>
      </ProjectBar>

      <Workspace>
        <DocBar>
          <DocTabs>
            <DocTab $w={32}>us<svg width="3" height="1" /><Cross /></DocTab>
            {docs.map(([name, w, active]) => (
              <DocTab key={name} $w={w} $active={active}><DocIcon c={active ? '#1486f3' : '#444'} /><span>{name}</span><Cross /></DocTab>
            ))}
          </DocTabs>
          <Tools>
            <AddDoc><Plus c="#555" s={10} /></AddDoc>
            <ToolGroup $ml={8}><Tool><svg width="12" height="14" fill="none" stroke="#555"><path d="M.5 .5H7.500L11 4V13.500H.5ZM7.500 .5V4H11" /><path d="M4 8H8L6 10.500Z" fill="#555" stroke="none" /></svg></Tool></ToolGroup>
            <Separator />
            <ToolGroup>
              <Tool $active><svg width="12" height="16"><path d="M1 0V13L4 10.500L6.500 15.500L9 14L6.500 9.500H10.500Z" fill="#fff" /></svg></Tool>
              <Tool><svg width="16" height="18" viewBox="0 0 16 18"><path d="M5 17Q4.500 14 1.500 10.500Q.5 8.500 2 8.500Q3 8.500 4.500 11L3 4Q3 2.500 4 2.500Q5 2.500 5.500 4L6.500 8V2Q6.500 .7 7.500 .7Q8.500 .7 8.500 2L9 8L10.500 2.500Q11 1.500 12 2Q12.700 2.500 12.300 4L11.500 8.500L13.500 5.500Q14.500 4.500 15 5.500L14 10Q13 14 12 17" fill="#fff" stroke="#666" /></svg></Tool>
            </ToolGroup>
            <ToolGroup $ml={7}><Tool><svg width="16" height="14" fill="none" stroke="#666"><rect x=".5" y=".5" width="15" height="12" rx="1" /><path d="M0 2H16" strokeWidth="2" /><path d="M3 5.500H13M3 7.500H13M3 9.500H9" /></svg></Tool></ToolGroup>
            <Separator />
            <ToolGroup><Tool><svg width="14" height="14"><path d="M0 0H11L14 3V14H0Z" fill="#666" /><rect x="4" y="0" width="6" height="5" fill="#eee" /><rect x="7" y="1" width="2" height="3" fill="#666" /><rect x="2.500" y="7.500" width="9" height="5" fill="#f4f4f4" /><path d="M4 9.500H10M4 11.500H10" stroke="#999" strokeWidth=".8" /></svg></Tool></ToolGroup>
            <ToolGroup $ml={7}><Tool><Turn /></Tool><Tool><Turn flip /></Tool></ToolGroup>
            <Separator />
            <ToolGroup><Tool><Magnifier /></Tool><Tool><Magnifier plus /></Tool><Tool>1:1</Tool></ToolGroup>
          </Tools>
        </DocBar>

        <Canvas>
          <Gradients />
          <Clip>
            <LoopFrame />
            <Sliver $y={217} $h={5} $bg="linear-gradient(#888 1px, #d5d5d5 1px)" />
            <Sliver $y={223} $h={5} $bg="#ffab2d" />
            <Sliver $y={370} $h={17} $bg="linear-gradient(#b5ea12, #4a9a38)" />
            <Sliver $y={387} $h={40} $bg="linear-gradient(#fff, #eee)" />
            <Sliver $y={426} $h={25} $bg="linear-gradient(#888 1px, #eee 1px, #ddd 50%, #c5c5c5 52%)" />
            <Sliver $y={474} $h={4} $bg="linear-gradient(#f2e3a0 1px, #f3bf00 2px)" />
            <ScrollMark $x={1345} $y={365} width="11" height="85"><g fill="#1f9a2c"><rect x="3" y="10" width="1" height="1" /><rect x="6" y="10" width="1" height="1" /><rect x="3" y="13" width="1" height="1" /><rect x="6" y="13" width="1" height="1" /><rect x="3" y="16" width="1" height="1" /><rect x="6" y="16" width="1" height="1" /></g><path d="M0 0L10 6L0 13Z" fill="#b3b3b3" /><path d="M0 32Q4 36 3 41Q2 45 0 47" fill="none" stroke="#aaa" strokeWidth="1.300" /><path d="M1.500 71V76" stroke="#222" strokeWidth="1.500" /></ScrollMark>
            <ParamBlock x={126} y={370} />
            <ParamBlock x={155} y={533} output />
            <Node $x={885} $y={370} $w={30}>
              <Art width="30" height="90"><Shaded><path d="M.5 4V85Q.5 88.500 4 88.500H40V4Z" fill="url(#body)" stroke="#828282" /></Shaded><path d="M.5 16.500V3Q.5 .5 3 .5H30V16.500Z" fill="url(#orange)" stroke="#f0a528" /><Dots x={4} n={8} c="#d89000" /><PlugIn /><rect x="4.500" y="59.500" width="30" height="26" rx="3" fill="url(#btn)" stroke="#8c8c8c" /></Art>
            </Node>
            <MoveBlock />
            {[...variables].reverse().map(([x, n, v, w]) => <VariableBlock key={n} x={x} name={n} value={v} labelW={w} />)}
            <StartBlock />
            <ScrollMark $x={12} $y={364} width="11" height="15"><path d="M11 0V15L0 7.500Z" fill="#b0b0b0" /></ScrollMark>
            <ScrollMark $x={676} $y={625} width="15" height="12"><path d="M0 0H15L7.500 11.500Z" fill="#b0b0b0" /></ScrollMark>
          </Clip>
        </Canvas>

        <EditorTab>
          <PencilButton><Pencils s={18} /></PencilButton>
          <svg width="17" height="22" viewBox="0 0 17 22"><rect y="2" width="17" height="16" fill="#6b6b6b" /><path d="M0 19.500H17M0 21.500H17" stroke="#6b6b6b" /><circle cx="8.500" cy="9.800" r="4.500" fill="none" stroke="#fff" strokeWidth="2" /><path d="M1.500 9.800H5M12 9.800H15.500" stroke="#6b6b6b" strokeWidth="3" /><path d="M2 9.800H5.500M11.500 9.800H15" stroke="#fff" strokeWidth="1.200" /><rect x="6.200" y="8" width="4.600" height="3.600" rx="1" fill="#fff" /><circle cx="8.500" cy="9.800" r="1" fill="#6b6b6b" /></svg>
        </EditorTab>
        <Editor>
          <EditorBody>
            <PageField>1/1</PageField>
            <PageFrame>
              <MediaButton><svg width="20" height="26" viewBox="0 0 20 26"><path d="M4 6H19V24.500H4Z" fill="#fff" stroke="#444" /><path d="M.7 .7H12L16 4.500V22H.7Z" fill="#effcfc" stroke="#444" strokeWidth="1.100" /><path d="M12 .7V4.500H16" fill="#fff" stroke="#444" /><path d="M3 14H14M3 17H14M3 20H11" stroke="#7ccfd8" strokeWidth=".9" /><path d="M3 6V3.500H11V6" fill="none" stroke="#444" strokeWidth="1.200" /><path d="M7 3.500V10.500" stroke="#444" strokeWidth="2" /><path d="M5 10.800H9" stroke="#444" strokeWidth="1.200" /></svg></MediaButton>
              <MediaButton><svg width="21" height="23"><rect x=".6" y=".6" width="19.800" height="21.800" fill="#fff" stroke="#333" strokeWidth="1.200" /><rect x="3" y="3" width="15" height="13" fill="url(#sky)" stroke="#333" /><path d="M3.500 15.500V13.500Q9 10 13 13L17.500 14V15.500Z" fill="#3b9a2a" /></svg></MediaButton>
              <MediaButton><svg width="23" height="25"><path d="M3 5L21 0L22.500 4L5 9Z" fill="#fff" stroke="#555" strokeWidth=".6" /><path d="M7 3.500L10 8M12 2L15 6.500M17 .8L20 5" stroke="#222" strokeWidth="2" /><path d="M0 4L7 7L5 12H0Z" fill="#333" /><rect x="1" y="8" width="21" height="16.500" fill="#444" /><path d="M6 10H22" stroke="#fff" strokeWidth="2.500" strokeDasharray="3 2" /><path d="M3 14.500H20M3 18.500H20M12 14.500V18.500M3 22H15" stroke="#bbb" strokeWidth=".8" /></svg></MediaButton>
              <MediaButton><Speaker s={26} /></MediaButton>
              <MediaButton><svg width="26" height="27"><path d="M5 20L3 26H23L21 20Z" fill="#333" /><circle cx="13" cy="12.500" r="11.500" fill="#f0f0f0" stroke="#555" strokeWidth="1.200" /><circle cx="13" cy="12.500" r="8" fill="#fff" stroke="#555" strokeWidth="1.300" /><circle cx="13" cy="12.500" r="4.500" fill="#4b6685" stroke="#444" /><circle cx="11.800" cy="11" r="1.500" fill="#bfd5ec" /></svg></MediaButton>
            </PageFrame>
            <Copyright>©2013 The LEGO Group.</Copyright>
          </EditorBody>
        </Editor>

        <Footer>
          <Palette>
            <Categories>
              <ActiveCategory><Swatch $from="#3c7a35" $to="#a8dc1c" $edge="#7cab35" $active /></ActiveCategory>
              <OtherCategories>
                <Swatch $from="#ffe000" $to="#ff9430" $edge="#f5a623" />
                <Swatch $from="#ffff00" $to="#ffe600" $edge="#ecdc00" />
                <Swatch $from="#ff4a00" $to="#a30000" $edge="#c92000" />
                <Swatch $from="#00b4ff" $to="#0000a0" $edge="#0050d8" />
                <Swatch $from="#00cfcc" $to="#009c9c" $edge="#119a9a" />
              </OtherCategories>
            </Categories>
            <PaletteBlocks>{paletteIcons.map((icon, i) => <PaletteBlock key={i} icon={icon} />)}</PaletteBlocks>
          </Palette>
          <Splitter>
            <SplitterGrip width="12" height="22"><path d="M8 1H4L1 4V18L4 21H8" fill="#fafafa" stroke="#6d7577" strokeWidth="2" /><rect x="4" y="3" width="6" height="16" fill="#fafafa" /><path d="M5.500 7L11.500 11L5.500 15Z" fill="#444" /></SplitterGrip>
          </Splitter>
          <Hardware>
            <HwTabs>
              <HwTab $active><svg width="19" height="19"><path d="M12 1H1V15H12" fill="none" stroke="#0a8ff0" strokeWidth="2.500" /><path d="M0 17.500H16" stroke="#0a8ff0" strokeWidth="2" strokeDasharray="4 1.500" /><circle cx="12" cy="8.500" r="7.500" fill="#0a8ff0" stroke="#fff" /><path d="M10 7.500H13V12.500M10 12.500H15M11 4.500H13.500" stroke="#fff" strokeWidth="2" fill="none" /></svg></HwTab>
              <HwTab><svg width="19" height="19"><rect width="19" height="19" fill="#fff" /><path d="M2 4H5V7H6.500V4H8.500V7H10.500V4H12.500V7H14V4H17V14H14V16H5V14H2Z" fill="#777" /></svg></HwTab>
              <HwTab><svg width="19" height="19"><rect width="19" height="19" fill="#fff" /><path d="M2 4H12M2 9.500H12M2 15H12" stroke="#777" strokeWidth="3" /><g fill="#777"><circle cx="15.500" cy="4" r="1.700" /><circle cx="15.500" cy="9.500" r="1.700" /><circle cx="15.500" cy="15" r="1.700" /></g></svg></HwTab>
            </HwTabs>
            <HwContent>
              <svg width="271" height="102" viewBox="1038 652 271 102">
                <rect x="1103.500" y="666.500" width="74" height="74" fill="#fff" stroke="#b2b2b2" /><rect x="1104" y="667" width="73" height="67" fill="#dadada" />
                <rect x="1110" y="677" width="60" height="42" fill="#fff" stroke="#b6b6b6" strokeWidth="3" /><rect x="1137" y="720" width="6" height="20" fill="#bbb" />
                <g transform="translate(1126 686)"><Ev3Mark c="#b5b5b5" bg="#fff" w={28} /></g>
                <path d="M1178 699H1213" stroke="#b8b8b8" strokeWidth="3.500" /><circle cx="1196.500" cy="699" r="10.500" fill="#fff" /><circle cx="1196.500" cy="699" r="9.300" fill="#b5b5b5" />
                <path d="M1193.500 696L1199.500 702M1199.500 696L1193.500 702" stroke="#fff" strokeWidth="2.300" />
                <path d="M1216 689H1236V709H1216L1213 706V692Z" fill="#bababa" /><path d="M1236 692.500H1243.500V705.500H1236Z" fill="#d0d0d0" /><path d="M1238.500 694.500V697.500M1242 694.500V697.500M1238.500 700.500V704M1242 700.500V704" stroke="#fff" strokeWidth="1.500" />
              </svg>
            </HwContent>
          </Hardware>
          <Controls>
            <Ev3Badge>EV3</Ev3Badge>
            <ControlButton $mt={5}><svg width="14" height="17"><path d="M5 2H10M5 6H10" stroke="#aaa" strokeWidth="3" /><path d="M1 9H14L7.500 16Z" fill="#aaa" /></svg></ControlButton>
            <ControlButton $mt={7} $round><svg width="8" height="10"><path d="M0 0L8 5L0 10Z" fill="#aaa" /></svg></ControlButton>
            <ControlButton $mt={7}><svg width="16" height="12"><path d="M4.500 1Q-1 6 4.500 11M11.500 1Q17 6 11.500 11" fill="none" stroke="#aaa" strokeWidth="1.500" /><path d="M5.500 1.500L12 6L5.500 10.500Z" fill="#aaa" /></svg></ControlButton>
          </Controls>
        </Footer>
      </Workspace>
    </Window>
  );
}
